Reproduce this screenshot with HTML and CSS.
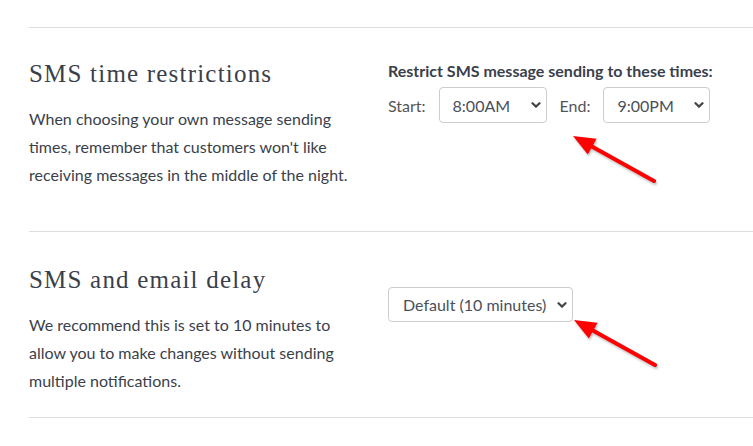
FILE: index.html
```html
<!DOCTYPE html>
<html lang="en">
<head>
<meta charset="UTF-8" />
<meta name="viewport" content="width=device-width, initial-scale=1" />
<title>Notification settings</title>
<link rel="stylesheet" href="styles.css">
</head>
<body>

<div class="settings">

  <section class="row row-first">
    <div class="info">
      <h2>SMS time restrictions</h2>
      <p>When choosing your own message sending times, remember that customers won't like receiving messages in the middle of the night.</p>
    </div>
    <div class="control">
      <div class="control-title">Restrict SMS message sending to these times:</div>
      <div class="times">
        <label class="time-label" for="start">Start:</label>
        <span class="select-wrap">
          <select id="start" class="select select-time">
            <option>8:00AM</option>
          </select>
          <svg class="chevron" viewBox="0 0 10 6" width="10" height="6"><path d="M1.5 1.2 L5 4.6 L8.5 1.2" /></svg>
        </span>
        <label class="time-label" for="end">End:</label>
        <span class="select-wrap">
          <select id="end" class="select select-time select-end">
            <option>9:00PM</option>
          </select>
          <svg class="chevron" viewBox="0 0 10 6" width="10" height="6"><path d="M1.5 1.2 L5 4.6 L8.5 1.2" /></svg>
        </span>
      </div>
    </div>
    <!-- annotation arrow -->
    <svg class="arrow arrow-1" viewBox="0 0 100 65" width="100" height="65">
      <line x1="31" y1="21" x2="94" y2="56" />
      <polygon points="13,11 36.6,13.8 27.8,29.6" />
    </svg>
  </section>

  <section class="row row-last">
    <div class="info">
      <h2>SMS and email delay</h2>
      <p>We recommend this is set to 10 minutes to allow you to make changes without sending multiple notifications.</p>
    </div>
    <div class="control">
      <span class="select-wrap select-delay-wrap">
        <select class="select select-delay">
          <option>Default (10 minutes)</option>
        </select>
        <svg class="chevron" viewBox="0 0 10 6" width="10" height="6"><path d="M1.5 1.2 L5 4.6 L8.5 1.2" /></svg>
      </span>
    </div>
    <svg class="arrow arrow-2" viewBox="0 0 100 65" width="100" height="65">
      <line x1="31" y1="21" x2="94" y2="56" />
      <polygon points="13,11 36.6,13.8 27.8,29.6" />
    </svg>
  </section>

</div>

</body>
</html>
```

FILE: styles.css
```css
body { margin: 0; background: #fff; color: #3a3f4b; font-family: Lato, "Open Sans", sans-serif; }
.settings { margin: 27px 0 0 29px; }
.row { position: relative; display: flex; border-top: 1px solid #dedede; }
.row-first { padding: 31px 0 42px; }
.row-last { padding: 33px 0 22px; border-bottom: 1px solid #dedede; }
.info { width: 359px; flex: none; }
.info h2 { margin: 0; font-family: "Liberation Serif", "DejaVu Serif", serif; font-weight: normal; font-size: 25px; line-height: 30px; letter-spacing: 1.2px; color: #3a3f4b; }
.info p { margin: 16px 0 0; font-size: 16px; line-height: 28px; width: 325px; }
.control { flex: 1; }
.control-title { margin-top: 2px; font-weight: bold; font-size: 16px; line-height: 20px; }
.times { display: flex; align-items: center; margin-top: 6px; }
.time-label { font-size: 16px; color: #555; margin-right: 13px; }
.select-wrap { position: relative; display: inline-block; }
.select-wrap + .time-label { margin-left: 13px; }
.select {
  appearance: none; -webkit-appearance: none;
  height: 36px; border: 1px solid #cdcdcd; border-radius: 4px; background: #fff;
  font-family: Lato, sans-serif; font-size: 16px; color: #4a4f5a;
  padding: 0 26px 0 13px; margin: 0;
}
.select-time { width: 108px; }
.select-end { width: 107px; }
.select-delay { width: 185px; height: 35px; padding-left: 14px; font-size: 16px; }
.select-delay-wrap { margin-top: 22px; }
.chevron { position: absolute; right: 6px; top: 15px; fill: none; stroke: #444; stroke-width: 2.2; stroke-linecap: round; pointer-events: none; }
.arrow { position: absolute; fill: #f00; filter: drop-shadow(1px 2px 1px rgba(0,0,0,0.25)); }
.arrow line { stroke: #f00; stroke-width: 4; stroke-linecap: round; }
.arrow-1 { left: 531px; top: 97px; }
.arrow-2 { left: 532px; top: 77px; }
```
